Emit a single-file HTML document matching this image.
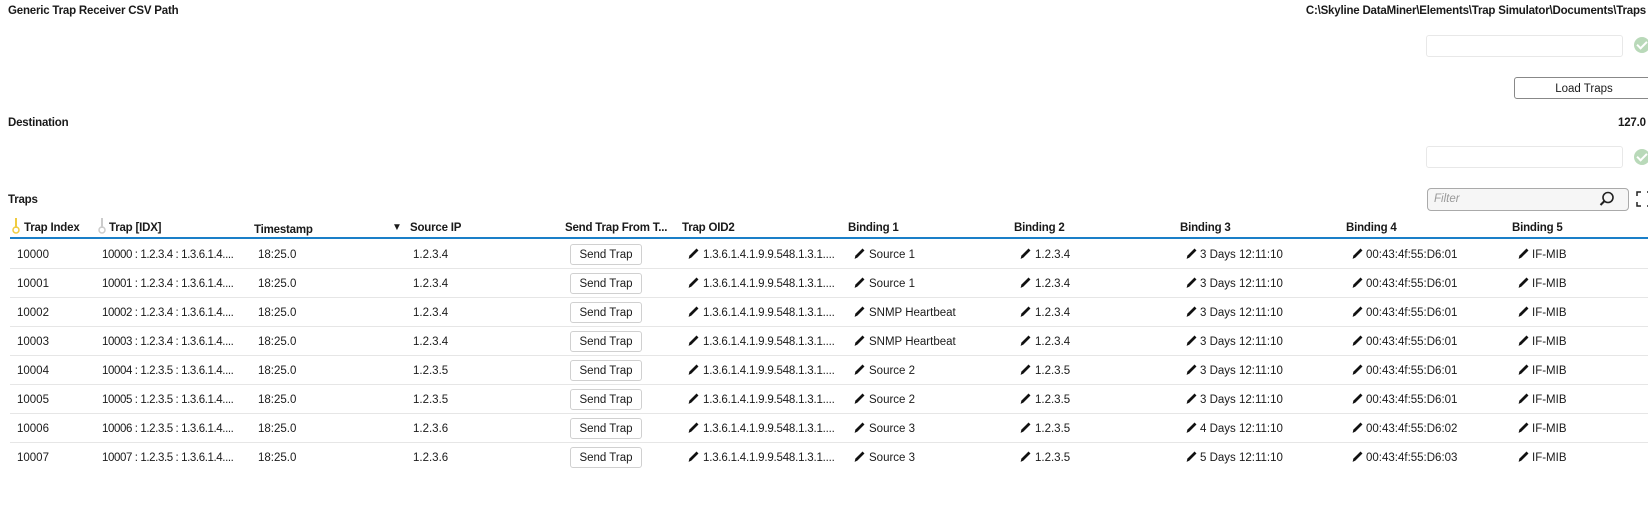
<!DOCTYPE html>
<html><head><meta charset="utf-8"><style>
body{margin:0;width:1648px;height:506px;overflow:hidden;background:#fff;font-family:"Liberation Sans",sans-serif;font-size:11.5px;color:#1a1a1a;position:relative}
.a{position:absolute;white-space:nowrap}
.b{font-weight:bold;letter-spacing:-0.2px}
.inp{position:absolute;border:1px solid #e8e8e8;border-radius:3px;background:#fff}
.chk{position:absolute;width:16px;height:16px;border-radius:50%;background:#b9d9b9}
.chk:after{content:"";position:absolute;left:5px;top:2px;width:4px;height:8px;border:solid #fff;border-width:0 2px 2px 0;transform:rotate(45deg)}
.btn{position:absolute;border:1px solid #d0d0d0;border-radius:3px;background:#fff;text-align:center;box-sizing:border-box}
.sep{position:absolute;left:10px;width:1638px;height:1px;background:#e6e6e6}
.pen{position:absolute;width:13px;height:13px}
</style></head><body>
<div class="a b" style="left:8px;top:5px">Generic Trap Receiver CSV Path</div>
<div class="a b" style="right:2px;top:5px">C:\Skyline DataMiner\Elements\Trap Simulator\Documents\Traps</div>
<div class="inp" style="left:1426px;top:35px;width:195px;height:20px"></div>
<div class="chk" style="left:1634px;top:37px"></div>
<div class="btn" style="left:1514px;top:77px;width:140px;height:22px;border-color:#888;line-height:22px">Load Traps</div>
<div class="a b" style="left:8px;top:117px">Destination</div>
<div class="a b" style="left:1618px;top:117px">127.0</div>
<div class="inp" style="left:1426px;top:146px;width:195px;height:20px"></div>
<div class="chk" style="left:1634px;top:149px"></div>
<div class="a b" style="left:8px;top:194px">Traps</div>
<div class="inp" style="left:1427px;top:188px;width:200px;height:21px;border-color:#aaa;background:#f6f6f6;border-radius:4px"></div>
<div class="a" style="left:1434px;top:193px;color:#999;font-style:italic">Filter</div>
<svg class="a" style="left:1598px;top:190px" width="18" height="18" viewBox="0 0 18 18"><circle cx="10" cy="7.5" r="5" fill="none" stroke="#222" stroke-width="1.6"/><path d="M6.5 11 L2.5 15" stroke="#222" stroke-width="2"/></svg>
<svg class="a" style="left:1636px;top:191px" width="12" height="16"><path d="M1 5V1h4M1 11v4h4M11 1h4M11 15h4" fill="none" stroke="#222" stroke-width="1.5"/></svg>
<svg class="a" style="left:12px;top:218px" width="8" height="16"><rect x="3" y="0" width="2" height="10" fill="#f0cc40"/><circle cx="4" cy="12" r="3" fill="none" stroke="#f0cc40" stroke-width="1.5"/></svg>
<svg class="a" style="left:98px;top:218px" width="8" height="16"><rect x="3" y="0" width="2" height="10" fill="#ccc"/><circle cx="4" cy="12" r="3" fill="none" stroke="#ccc" stroke-width="1.5"/></svg>
<div class="a b" style="left:24px;top:222px">Trap Index</div>
<div class="a b" style="left:109px;top:222px">Trap [IDX]</div>
<div class="a b" style="left:254px;top:224px">Timestamp</div>
<div class="a" style="left:392px;top:222px;font-size:10px">▼</div>
<div class="a b" style="left:410px;top:222px">Source IP</div>
<div class="a b" style="left:565px;top:222px">Send Trap From T...</div>
<div class="a b" style="left:682px;top:222px">Trap OID2</div>
<div class="a b" style="left:848px;top:222px">Binding 1</div>
<div class="a b" style="left:1014px;top:222px">Binding 2</div>
<div class="a b" style="left:1180px;top:222px">Binding 3</div>
<div class="a b" style="left:1346px;top:222px">Binding 4</div>
<div class="a b" style="left:1512px;top:222px">Binding 5</div>
<div class="a" style="left:10px;top:237px;width:1638px;height:2px;background:#1a7fc8"></div>
<div id="rows"></div>
<script>
var d=[["10000","1.2.3.4","1.2.3.4","Source 1","1.2.3.4","3","10","01"],
["10001","1.2.3.4","1.2.3.4","Source 1","1.2.3.4","3","10","01"],
["10002","1.2.3.4","1.2.3.4","SNMP Heartbeat","1.2.3.4","3","10","01"],
["10003","1.2.3.4","1.2.3.4","SNMP Heartbeat","1.2.3.4","3","10","01"],
["10004","1.2.3.5","1.2.3.5","Source 2","1.2.3.5","3","10","01"],
["10005","1.2.3.5","1.2.3.5","Source 2","1.2.3.5","3","10","01"],
["10006","1.2.3.5","1.2.3.6","Source 3","1.2.3.5","4","10","02"],
["10007","1.2.3.5","1.2.3.6","Source 3","1.2.3.5","5","10","03"]];
var pen='<svg viewBox="0 0 12 12" width="13" height="13"><path d="M1.5 11 L2.2 8 L8.8 1.4 L10.6 3.2 L4 9.8 Z" fill="#111"/></svg>';
var h="";
d.forEach(function(r,i){var c=254+29*i,t=c-5;
function tx(x,s){h+='<div class="a" style="left:'+x+'px;top:'+t+'px">'+s+'</div>';}
function pn(x){h+='<div class="pen" style="left:'+x+'px;top:'+(c-7)+'px">'+pen+'</div>';}
tx(17,r[0]);tx(102,'<span style="letter-spacing:-0.4px">'+r[0]+" : "+r[1]+" : 1.3.6.1.4....</span>");tx(258,"18:25.0");tx(413,r[2]);
h+='<div class="btn" style="left:570px;top:'+(c-10)+'px;width:72px;height:21px;line-height:21px">Send Trap</div>';
pn(687);tx(703,'<span style="letter-spacing:-0.2px">1.3.6.1.4.1.9.9.548.1.3.1....</span>');
pn(853);tx(869,r[3]);pn(1019);tx(1035,r[4]);
pn(1185);tx(1200,r[5]+" Days 12:11:10");pn(1351);tx(1366,"00:43:4f:55:D6:"+r[7]);
pn(1517);tx(1532,"IF-MIB");
if(i<7)h+='<div class="sep" style="top:'+(c+14)+'px"></div>';});
document.getElementById("rows").innerHTML=h;
</script>
</body></html>
